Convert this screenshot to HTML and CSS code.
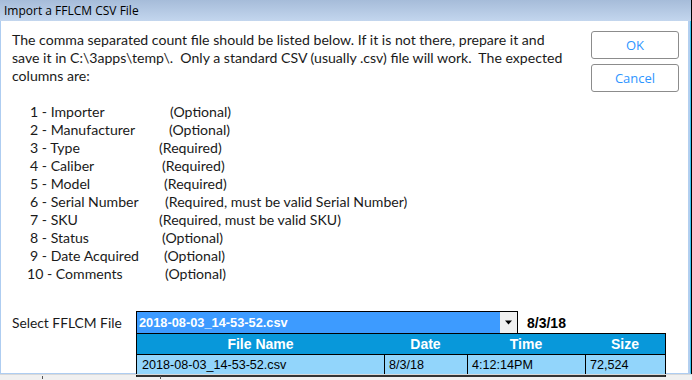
FILE: index.html
```html
<!DOCTYPE html>
<html>
<head>
<meta charset="utf-8">
<link rel="stylesheet" href="styles.css">
</head>
<body>
<div class="window">
  <div class="titlebar">Import a FFLCM CSV File</div>
  <div class="frame">
    <div class="client">
      <div class="top">
        <p class="intro">The comma separated count file should be listed below. If it is not there, prepare it and<br>save it in C:\3apps\temp\.&nbsp; Only a standard CSV (usually .csv) file will work.&nbsp; The expected<br>columns are:</p>
        <div class="buttons">
          <div class="btn">OK</div>
          <div class="btn">Cancel</div>
        </div>
      </div>
      <div class="cols">
        <div class="row"><span class="lbl">1 - Importer</span><span class="req o11">(Optional)</span></div>
        <div class="row"><span class="lbl">2 - Manufacturer</span><span class="req o10">(Optional)</span></div>
        <div class="row"><span class="lbl">3 - Type</span><span class="req o0">(Required)</span></div>
        <div class="row"><span class="lbl">4 - Caliber</span><span class="req o3">(Required)</span></div>
        <div class="row"><span class="lbl">5 - Model</span><span class="req o5">(Required)</span></div>
        <div class="row"><span class="lbl">6 - Serial Number</span><span class="req o6">(Required, must be valid Serial Number)</span></div>
        <div class="row"><span class="lbl">7 - SKU</span><span class="req o0">(Required, must be valid SKU)</span></div>
        <div class="row"><span class="lbl">8 - Status</span><span class="req o3">(Optional)</span></div>
        <div class="row"><span class="lbl">9 - Date Acquired</span><span class="req o5">(Optional)</span></div>
        <div class="row"><span class="lbl lbl10">10 - Comments</span><span class="req o6">(Optional)</span></div>
      </div>
      <div class="select-row">
        <span class="sel-label">Select FFLCM File</span>
        <div class="combo">
          <span class="combo-text">2018-08-03_14-53-52.csv</span>
          <span class="combo-btn"><svg width="9" height="5" viewBox="0 0 9 5"><path d="M1 0.5h7L4.5 4.5z" fill="#000"/></svg></span>
        </div>
        <span class="combo-date">8/3/18</span>
      </div>
      <div class="dropdown">
        <div class="dd-head">
          <span class="c1">File Name</span><span class="c2">Date</span><span class="c3">Time</span><span class="c4">Size</span>
        </div>
        <div class="dd-row">
          <span class="c1">2018-08-03_14-53-52.csv</span><span class="c2">8/3/18</span><span class="c3">4:12:14PM</span><span class="c4">72,524</span>
        </div>
      </div>
    </div>
  </div>
</div>
<div class="status"><span class="tick t1"></span><span class="tick t2"></span></div>
</body>
</html>
```
FILE: styles.css
```css
html, body {
  margin: 0;
  padding: 0;
}
body {
  width: 692px;
  height: 380px;
  overflow: hidden;
  background: #f0f0f0;
  font-family: Lato, "Liberation Sans", sans-serif;
}
.window {
  width: 692px;
  border-right: 1px solid #000;
  box-sizing: border-box;
}
.titlebar {
  height: 21px;
  line-height: 21px;
  padding-left: 4px;
  font-family: "Open Sans", "Noto Sans", sans-serif;
  font-size: 12px;
  color: #000;
  background: linear-gradient(to bottom, #a6bcd9, #c3d6ee);
}
.frame {
  border-right: 1px solid #3cc4ee;
  border-left: 1px solid #aecdf1;
  border-bottom: 1px solid #aecdf1;
}
.client {
  position: relative;
  height: 352px;
  background: #fff;
  border-right: 2px solid #b3cff0;
  color: #1a1a1a;
}
.top {
  display: flex;
  justify-content: space-between;
  padding: 10px 9px 0 11px;
}
.intro {
  margin: 0;
  font-size: 14.1px;
  line-height: 18px;
}
.buttons {
  display: flex;
  flex-direction: column;
  gap: 5px;
}
.btn {
  width: 86px;
  height: 26px;
  border: 1px solid #8c8c8c;
  border-radius: 3px;
  text-align: center;
  line-height: 26px;
  font-family: "Open Sans", "Noto Sans", sans-serif;
  font-size: 13px;
  color: #2e95ff;
}
.cols {
  padding: 11px 0 0 26px;
  font-size: 14.1px;
  line-height: 18px;
}
.row {
  display: flex;
}
.lbl {
  width: 128px;
  padding-left: 3px;
  box-sizing: border-box;
}
.lbl10 {
  padding-left: 0;
}
.o0 { padding-left: 4px; }
.o3 { padding-left: 7px; }
.o5 { padding-left: 9px; }
.o6 { padding-left: 10px; }
.o10 { padding-left: 14px; }
.o11 { padding-left: 15px; }
.select-row {
  display: flex;
  align-items: center;
  padding: 28px 0 0 11px;
}
.sel-label {
  width: 124px;
  font-size: 13.8px;
}
.combo {
  display: flex;
  width: 382px;
  height: 23px;
  box-sizing: border-box;
  border: 1px solid #000;
  background: #3d9bff;
}
.combo-text {
  flex: 1;
  padding-left: 2px;
  line-height: 21px;
  font-family: "Liberation Sans", sans-serif;
  font-weight: bold;
  font-size: 12.8px;
  color: #fff;
}
.combo-btn {
  width: 17px;
  background: #f0f0f0;
  display: flex;
  align-items: center;
  justify-content: center;
}
.combo-date {
  padding-left: 9px;
  font-family: "Liberation Sans", sans-serif;
  font-weight: bold;
  font-size: 14px;
  color: #000;
}
.dropdown {
  position: absolute;
  left: 135px;
  top: 312px;
  width: 528px;
  border: 1px solid #000;
  border-bottom: 2px solid #333;
  font-family: "Liberation Sans", sans-serif;
  font-size: 12.6px;
}
.dd-head, .dd-row {
  display: grid;
  grid-template-columns: 247px 83px 118px 1fr;
  height: 20px;
  line-height: 20px;
}
.dd-head {
  background: #0898da;
  color: #fff;
  font-weight: bold;
  font-size: 14px;
  text-align: center;
  border-bottom: 1px solid #000;
}
.dd-row {
  background: #92d5fb;
  color: #000;
}
.dd-row span {
  padding-left: 5px;
}
.dd-row span + span {
  border-left: 1px solid #000;
  padding-left: 4px;
}
.status {
  position: relative;
  height: 5px;
  border-top: 1px solid #d9d9d9;
}
.tick {
  position: absolute;
  top: 1px;
  width: 1px;
  height: 3px;
  background: #555;
}
.t1 { left: 42px; }
.t2 { left: 160px; }
```
